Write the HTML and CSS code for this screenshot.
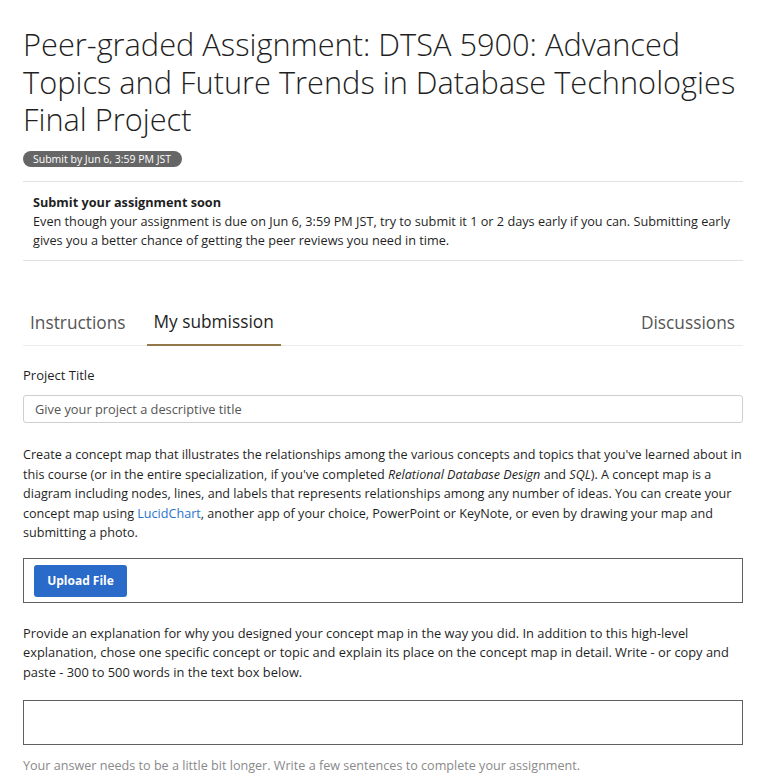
FILE: index.html
```html
<!DOCTYPE html>
<html lang="en">
<head>
<meta charset="utf-8">
<title>Peer-graded Assignment</title>
<link rel="stylesheet" href="styles.css">
</head>
<body>
<main class="page">
  <header class="head">
    <h1 class="title">Peer-graded Assignment: DTSA 5900: Advanced Topics and Future Trends in Database Technologies Final Project</h1>
    <span class="badge">Submit by Jun 6, 3:59 PM JST</span>
  </header>

  <section class="notice">
    <p class="notice-title">Submit your assignment soon</p>
    <p class="notice-text">Even though your assignment is due on Jun 6, 3:59 PM JST, try to submit it 1 or 2 days early if you can. Submitting early gives you a better chance of getting the peer reviews you need in time.</p>
  </section>

  <nav class="tabs">
    <a class="tab">Instructions</a>
    <a class="tab tab-active">My submission</a>
    <span class="tab-spacer"></span>
    <a class="tab tab-right">Discussions</a>
  </nav>

  <form class="form">
    <label class="label" for="ptitle">Project Title</label>
    <input class="input" id="ptitle" type="text" placeholder="Give your project a descriptive title">

    <p class="prompt">Create a concept map that illustrates the relationships among the various concepts and topics that you've learned about in this course (or in the entire specialization, if you've completed <em>Relational Database Design</em> and <em>SQL</em>). A concept map is a diagram including nodes, lines, and labels that represents relationships among any number of ideas. You can create your concept map using <a class="link">LucidChart</a>, another app of your choice, PowerPoint or KeyNote, or even by drawing your map and submitting a photo.</p>

    <div class="upload">
      <button type="button" class="btn">Upload File</button>
    </div>

    <p class="prompt prompt-2">Provide an explanation for why you designed your concept map in the way you did. In addition to this high-level explanation, chose one specific concept or topic and explain its place on the concept map in detail. Write - or copy and paste - 300 to 500 words in the text box below.</p>

    <div class="answer"></div>
    <p class="hint">Your answer needs to be a little bit longer. Write a few sentences to complete your assignment.</p>
  </form>
</main>
</body>
</html>
```

FILE: styles.css
```css
* { box-sizing: border-box; }
html, body { margin: 0; padding: 0; background: #fff; }
body {
  font-family: "Open Sans", "Liberation Sans", sans-serif;
  color: #1f1f1f;
  font-size: 13px;
  line-height: 19.5px;
}
.page {
  width: 720px;
  margin-left: 23px;
  padding-top: 26px;
}
.head { padding-bottom: 13px; border-bottom: 1px solid #e1e1e1; }
.title {
  margin: 0 0 10px;
  font-weight: 300;
  font-size: 30.75px;
  line-height: 37.5px;
  color: #1f1f1f;
}
.badge {
  display: inline-block;
  background: #666;
  color: #fff;
  font-size: 10.5px;
  line-height: 16px;
  padding: 0 11px 0 10px;
  border-radius: 8px;
}
.notice {
  padding: 11px 10px 10px;
  border-bottom: 1px solid #e1e1e1;
}
.notice p { margin: 0; font-size: 12.7px; line-height: 19px; }
.notice-title { font-weight: 700; }
.tabs {
  display: flex;
  align-items: flex-end;
  margin-top: 38px;
  border-bottom: 1px solid #ececec;
}
.tab {
  font-size: 17.3px;
  line-height: 24px;
  padding: 11px 7px 10px 7px;
  color: #555;
  cursor: pointer;
}
.tab:first-child { margin-right: 14px; }
.tab-active {
  color: #1f1f1f;
  border-bottom: 2px solid #93784a;
  margin-bottom: -1px;
}
.tab-spacer { flex: 1; }
.tab-right { padding-right: 8px; }
.form { padding-top: 19px; }
.label { display: block; font-size: 13px; line-height: 20px; margin-bottom: 10px; }
.input {
  display: block;
  width: 100%;
  height: 28px;
  border: 1px solid #cfcfcf;
  border-radius: 3px;
  padding: 0 11px;
  font-family: inherit;
  font-size: 12.8px;
  color: #1f1f1f;
}
.input::placeholder { color: #555; }
.prompt { margin: 22px 0 0; font-size: 12.6px; line-height: 19.5px; }
.link { color: #2a73cc; }
.upload {
  margin-top: 15px;
  border: 1px solid #606060;
  height: 45px;
  padding: 6px 10px;
}
.btn {
  background: #2a6ac8;
  color: #fff;
  border: none;
  border-radius: 3px;
  font-family: inherit;
  font-weight: 700;
  font-size: 12px;
  height: 32px;
  width: 93px;
}
.prompt-2 { margin-top: 21px; font-size: 12.85px; }
.answer {
  margin-top: 18px;
  height: 45px;
  border: 1px solid #606060;
}
.hint { margin: 11px 0 0; color: #8a8a8a; font-size: 12.6px; }
```
